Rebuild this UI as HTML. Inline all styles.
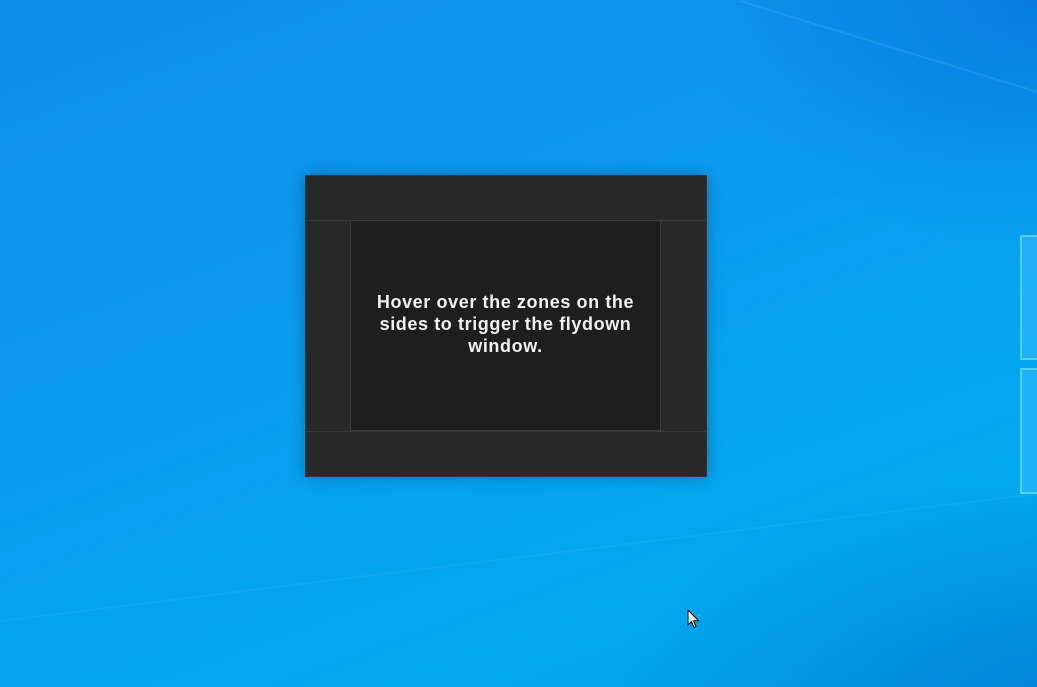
<!DOCTYPE html>
<html><head><style>
html,body{margin:0;padding:0;width:1037px;height:687px;overflow:hidden}
body{position:relative;background:linear-gradient(160deg,#0b8ee6 0%,#0c98ee 35%,#06a3f0 60%,#02a8ee 80%,#0199e2 100%);font-family:"Liberation Sans",sans-serif}
.ov{position:absolute;inset:0;background:radial-gradient(ellipse 500px 350px at 1037px 0,rgba(0,90,210,.45),transparent 70%),radial-gradient(ellipse 600px 300px at 1037px 687px,rgba(0,100,200,.35),transparent 70%)}
.streak{position:absolute;height:2px;background:rgba(150,220,255,.2);transform-origin:0 0}
.win{position:absolute;left:306px;top:176px;width:400px;height:300px;background:#282828;box-shadow:0 0 14px rgba(0,0,0,.35);outline:1px solid #333;box-sizing:border-box}
.inner{position:absolute;left:44px;top:44px;width:311px;height:211px;background:#1e1e1e;border:1px solid #3a3a3a;box-sizing:border-box}
.hl{position:absolute;left:0;width:400px;height:1px;background:#3a3a3a}
.txt{position:absolute;left:0;right:0;top:70px;text-align:center;color:#f0f0f0;font-size:18px;letter-spacing:0.6px;font-weight:bold;line-height:22px;padding:0 8px}
.pane{position:absolute;background:rgba(60,190,255,.5);border:2px solid rgba(120,230,255,.6);box-sizing:border-box}
</style></head><body>
<div class="ov"></div>
<div class="streak" style="left:740px;top:0;width:330px;transform:rotate(17deg);background:rgba(150,220,255,.15)"></div>
<div class="streak" style="left:0;top:620px;width:1100px;transform:rotate(-7deg);background:rgba(120,210,255,.1)"></div>
<div class="pane" style="left:1020px;top:235px;width:30px;height:125px"></div>
<div class="pane" style="left:1020px;top:368px;width:30px;height:126px"></div>
<div class="win">
<div class="hl" style="top:44px"></div>
<div class="hl" style="top:255px"></div>
<div class="inner"><div class="txt">Hover over the zones on the sides to trigger the flydown window.</div></div>
</div>
<svg style="position:absolute;left:687px;top:609px" width="13" height="20" viewBox="0 0 13 20"><path d="M1 1 L1 16 L4.5 12.5 L7 18.5 L9 17.6 L6.6 11.8 L11.5 11.8 Z" fill="#fff" stroke="#000" stroke-width="1"/></svg>
</body></html>
